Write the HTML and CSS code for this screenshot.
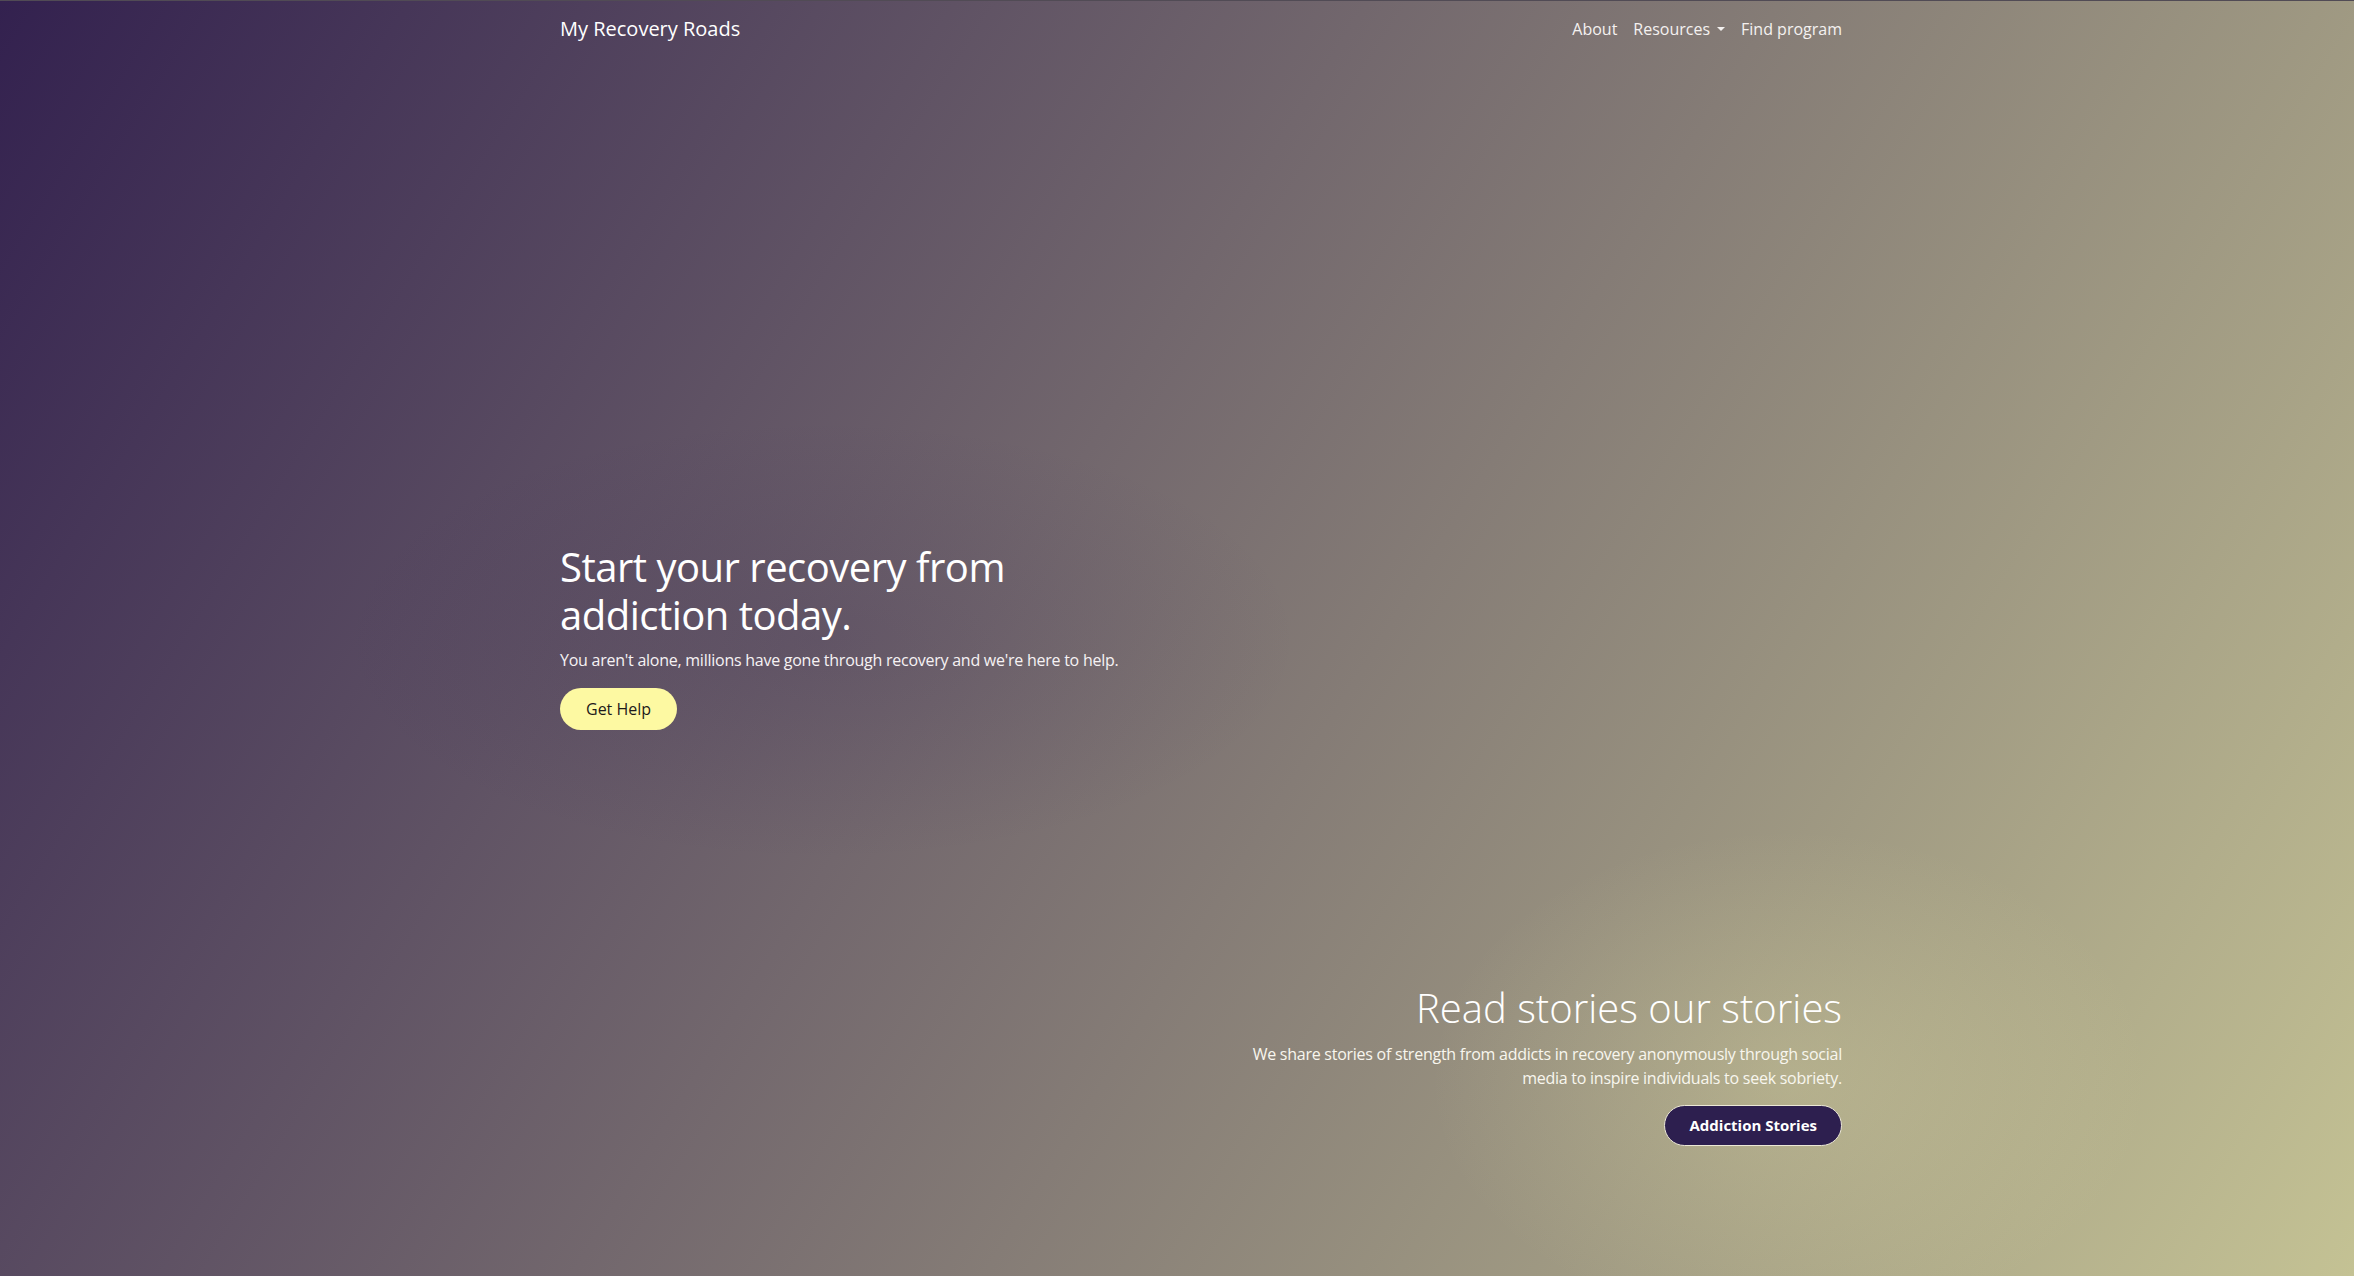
FILE: index.html
```html
<!DOCTYPE html>
<html lang="en">
<head>
<meta charset="utf-8">
<title>My Recovery Roads</title>
<link rel="stylesheet" href="styles.css">
</head>
<body>
  <nav class="navbar">
    <div class="container nav-inner">
      <a class="brand" href="#">My Recovery Roads</a>
      <ul class="nav-links">
        <li><a href="#">About</a></li>
        <li><a href="#" class="dropdown-toggle">Resources</a></li>
        <li><a href="#">Find program</a></li>
      </ul>
    </div>
  </nav>

  <main>
    <section class="hero">
      <div class="container">
        <div class="hero-text">
          <h1>Start your recovery from<br>addiction today.</h1>
          <p>You aren't alone, millions have gone through recovery and we're here to help.</p>
          <a href="#" class="btn btn-yellow">Get Help</a>
        </div>
      </div>
    </section>

    <section class="stories">
      <div class="container stories-inner">
        <div class="stories-text">
          <h2>Read stories our stories</h2>
          <p>We share stories of strength from addicts in recovery anonymously through social media to inspire individuals to seek sobriety.</p>
          <a href="#" class="btn btn-purple">Addiction Stories</a>
        </div>
      </div>
    </section>
  </main>
</body>
</html>
```
FILE: styles.css
```css
* { box-sizing: border-box; }

html, body { margin: 0; padding: 0; }

body {
  min-height: 100vh;
  font-family: "Open Sans", "Noto Sans", sans-serif;
  color: #fff;
  background:
    radial-gradient(ellipse 360px 250px at 1790px 1080px, rgba(222, 219, 162, 0.28), rgba(222, 219, 162, 0) 100%),
    radial-gradient(ellipse 480px 220px at 820px 640px, rgba(52, 34, 82, 0.18), rgba(52, 34, 82, 0) 100%),
    linear-gradient(122deg, #33214f 0%, #c4c294 100%);
  overflow: hidden;
}

a { color: inherit; text-decoration: none; }

.container {
  width: 1282px;
  margin-left: 560px;
}

/* Navbar */
.navbar {
  border-top: 1px solid #514b55;
  height: 57px;
}

.nav-inner {
  height: 56px;
  display: flex;
  align-items: center;
  justify-content: space-between;
}

.brand {
  font-size: 20px;
  line-height: 30px;
  color: #fff;
}

.nav-links {
  list-style: none;
  margin: 0;
  padding: 0;
  display: flex;
  align-items: center;
  gap: 16px;
}

.nav-links a {
  font-size: 16px;
  line-height: 24px;
  color: #f4f1f0;
  display: inline-block;
}

.dropdown-toggle::after {
  content: "";
  display: inline-block;
  margin-left: 7px;
  vertical-align: 4px;
  border-top: 4px solid #f4f1f0;
  border-left: 4px solid transparent;
  border-right: 4px solid transparent;
}

/* Hero */
.hero {
  padding-top: 486px;
}

.hero h1 {
  margin: 0;
  font-size: 40px;
  line-height: 48px;
  font-weight: 400;
  letter-spacing: -0.5px;
}

.hero p {
  margin: 9px 0 16px;
  font-size: 16px;
  line-height: 24px;
  letter-spacing: -0.25px;
  color: #f6f2f4;
}

.btn {
  display: inline-block;
  border-radius: 999px;
  font-size: 16px;
  line-height: 24px;
}

.btn-yellow {
  background: #fdf9a2;
  color: #1d1a1a;
  font-weight: 500;
  padding: 9px 26px;
}

/* Stories */
.stories {
  padding-top: 254px;
  padding-bottom: 128px;
}

.stories-inner {
  display: flex;
  justify-content: flex-end;
}

.stories-text {
  width: 610px;
  text-align: right;
}

.stories h2 {
  margin: 0;
  font-size: 40px;
  line-height: 48px;
  font-weight: 300;
}

.stories p {
  margin: 10px 0 15px;
  font-size: 16px;
  line-height: 24px;
  letter-spacing: -0.25px;
  color: #f8f6ee;
}

.btn-purple {
  background: #2d1f4f;
  color: #fff;
  font-size: 15px;
  font-weight: 700;
  line-height: 23px;
  padding: 8px 24px;
  border: 1px solid #ece8d6;
}
```
